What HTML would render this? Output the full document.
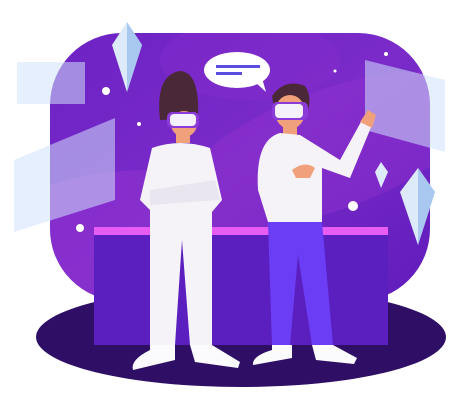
<!DOCTYPE html>
<html><head><style>html,body{margin:0;padding:0;background:#fff;width:473px;height:410px;overflow:hidden}</style></head>
<body>
<svg width="473" height="410" viewBox="0 0 473 410" xmlns="http://www.w3.org/2000/svg">
<defs>
<linearGradient id="bg" x1="0" y1="0" x2="1" y2="1">
<stop offset="0" stop-color="#6d22c4"/><stop offset="0.5" stop-color="#7a2bc9"/><stop offset="1" stop-color="#5f1cbb"/>
</linearGradient>
<clipPath id="cp"><rect x="50" y="33" width="380" height="268" rx="72"/></clipPath>
</defs>
<ellipse cx="241" cy="337" rx="205" ry="50" fill="#2f0f66"/>
<rect x="50" y="33" width="380" height="268" rx="72" fill="url(#bg)"/>
<g clip-path="url(#cp)" opacity="0.35">
<ellipse cx="150" cy="250" rx="170" ry="80" fill="#a23ad6"/>
<ellipse cx="330" cy="150" rx="160" ry="60" fill="#9b35d3" transform="rotate(-20 330 150)"/>
<ellipse cx="250" cy="60" rx="90" ry="40" fill="#8a30cf"/>
</g>
<rect x="17" y="62" width="68" height="42" fill="#cfe2fb" opacity="0.55"/>
<polygon points="14,160 115,118 115,200 14,232" fill="#cfe2fb" opacity="0.55"/>
<polygon points="365,60 445,80 445,152 365,130" fill="#cfe2fb" opacity="0.55"/>
<polygon points="127,22 142,45 127,92 112,45" fill="#dceafa"/>
<polygon points="127,22 142,45 127,92" fill="#a9c8ef"/>
<polygon points="418,168 435,192 418,245 400,192" fill="#dceafa"/>
<polygon points="418,168 435,192 418,245" fill="#a9c8ef"/>
<polygon points="381,162 388,172 381,188 375,172" fill="#dceafa"/>
<circle cx="106" cy="91" r="4" fill="#fff"/><circle cx="139" cy="124" r="2" fill="#fff"/>
<circle cx="80" cy="228" r="4" fill="#fff"/><circle cx="353" cy="206" r="5" fill="#fff"/>
<circle cx="386" cy="54" r="2" fill="#fff"/><circle cx="335" cy="71" r="1.5" fill="#fff"/>
<rect x="94" y="227" width="294" height="118" fill="#5b1fbf"/>
<rect x="94" y="227" width="294" height="8" fill="#e75cf2"/>
<ellipse cx="237" cy="70" rx="33" ry="18" fill="#fff"/>
<polygon points="255,82 266,92 262,78" fill="#fff"/>
<rect x="216" y="65" width="44" height="3" fill="#5b4de0"/>
<rect x="216" y="72" width="26" height="3" fill="#5b4de0"/>
<!-- left person -->
<path d="M160 120 Q155 75 180 71 Q200 72 198 118 Z" fill="#4a2838"/>
<rect x="176" y="128" width="14" height="15" fill="#f0a07a"/>
<ellipse cx="184" cy="124" rx="13" ry="13" fill="#f0a07a"/>
<rect x="167" y="112" width="32" height="16" rx="5" fill="#8a3bd8"/>
<rect x="170" y="114" width="26" height="12" rx="4" fill="#f4f1fa"/>
<path d="M152 148 Q180 138 210 148 L222 200 L212 212 L212 345 L190 345 L182 240 L175 345 L150 345 L150 210 L140 200 Z" fill="#f5f3f8"/>
<path d="M150 190 L215 180 L220 200 L150 205 Z" fill="#e9e6ef"/>
<path d="M150 345 L175 345 L175 360 L133 370 Q130 360 150 350 Z" fill="#fbfbfd"/>
<path d="M190 345 L212 345 L240 362 L238 368 L195 362 Z" fill="#fbfbfd"/>
<!-- right person -->
<path d="M272 96 Q285 78 305 86 Q312 96 308 110 L274 108 Z" fill="#4a2838"/>
<ellipse cx="290" cy="112" rx="15" ry="17" fill="#f0a07a"/>
<rect x="283" y="125" width="14" height="12" fill="#f0a07a"/>
<rect x="272" y="102" width="36" height="18" rx="5" fill="#8a3bd8"/>
<rect x="275" y="104" width="28" height="14" rx="4" fill="#f4f1fa"/>
<path d="M300 135 L340 160 L362 120 L372 125 L350 178 L322 168 L322 222 L268 222 L258 190 Q255 140 280 133 Z" fill="#f5f3f8"/>
<path d="M360 122 L368 110 L376 115 L372 128 Z" fill="#f0a07a"/>
<path d="M292 170 Q305 160 315 168 L310 178 L296 178 Z" fill="#f0a07a"/>
<path d="M268 222 L322 222 L333 345 L312 345 L298 255 L290 345 L272 345 Z" fill="#6b3df5"/>
<path d="M272 345 L292 345 L292 358 L253 365 Q252 356 272 350 Z" fill="#fbfbfd"/>
<path d="M312 345 L333 345 L357 358 L354 364 L316 360 Z" fill="#fbfbfd"/>
</svg>
</body></html>
